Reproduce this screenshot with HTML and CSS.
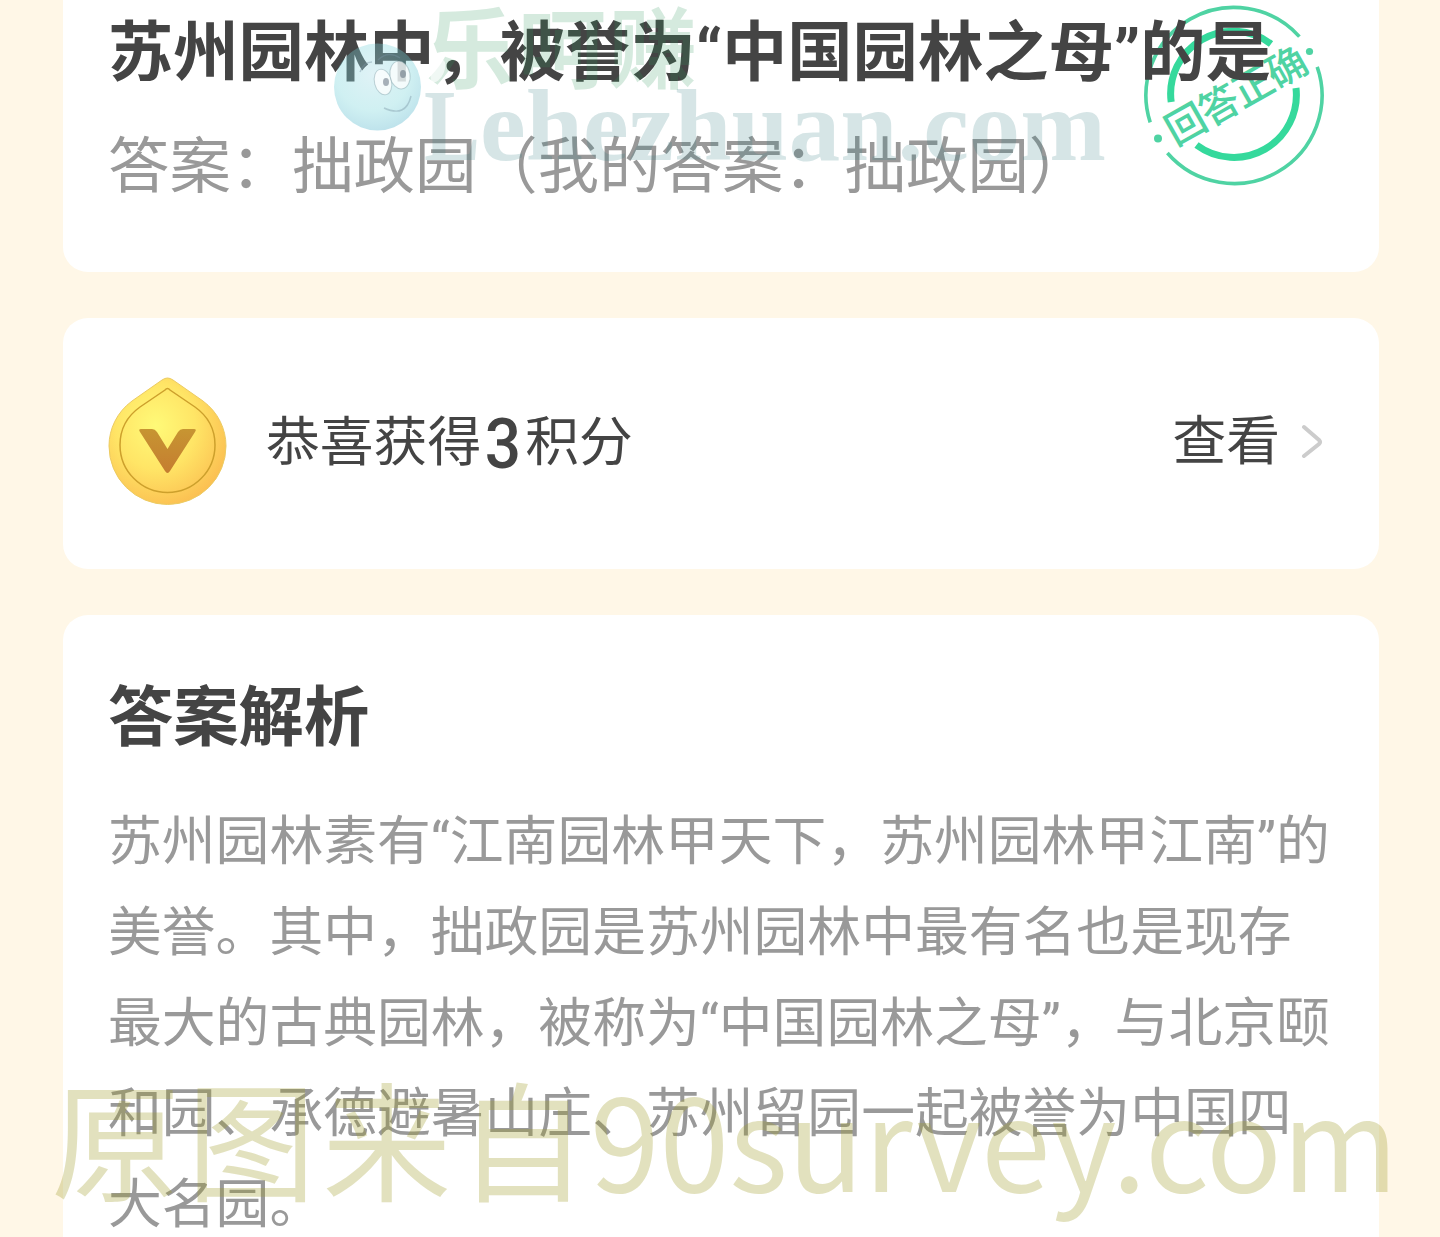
FILE: index.html
```html
<!DOCTYPE html>
<html lang="zh-CN">
<head>
<meta charset="utf-8">
<title>答案解析</title>
<link rel="stylesheet" href="styles.css">
</head>
<body>
<main class="page">
  <section class="card question">
    <h1 class="title">苏州园林中，被誉为“中国园林之母”的是</h1>
    <p class="answer">答案：拙政园（我的答案：拙政园）</p>
    <svg class="stamp" viewBox="0 0 190 190">
      <g fill="none" stroke="#4fd3a3" stroke-width="3.6">
        <path d="M11.200 122.400A88 88 0 0 1 160.400 36.600"/>
        <path d="M178.200 66.800A88 88 0 0 1 28.400 153"/>
      </g>
      <g fill="none" stroke="#35d99c" stroke-width="7">
        <path d="M32.200 102A62.500 62.500 0 0 1 132 44"/>
        <path d="M157 88A62.500 62.500 0 0 1 57.500 145"/>
      </g>
      <circle cx="19" cy="138.500" r="4"/>
      <circle cx="170.500" cy="51.500" r="3.600"/>
      <text transform="translate(98 95) rotate(-29.500)" x="-79" y="14.500" textLength="156">回答正确</text>
    </svg>
  </section>

  <section class="card reward">
    <svg class="coin" viewBox="0 0 120 132">
      <defs>
        <radialGradient id="gold" cx=".4" cy=".38" r=".68">
          <stop offset="0" stop-color="#fffa78"/>
          <stop offset=".5" stop-color="#ffe566"/>
          <stop offset="1" stop-color="#fbbd50"/>
        </radialGradient>
        <linearGradient id="bronze" x1="0" y1="0" x2="0" y2="1">
          <stop offset="0" stop-color="#c79532"/>
          <stop offset="1" stop-color="#c57d30"/>
        </linearGradient>
      </defs>
      <path d="M54 4Q59.500 0 65 4L95 25C110 36 118 53 118 70A58.500 58.500 0 0 1 1 70C1 53 9 36 24 25Z" fill="url(#gold)" stroke="#eccb62" stroke-width="1"/>
      <path d="M57 14Q59.500 11 62 14L87 31C101 41 107 55 107 69A47.500 47.500 0 0 1 12 69C12 55 18 41 32 31Z" fill="none" stroke="#cda02c" stroke-width="1.500"/>
      <path d="M33 53H44Q47 53 49 56L59.500 73L70 56Q72 53 75 53H86Q89 53 87 56L62 95Q59.500 99 57 95L32 56Q30 53 33 53Z" fill="url(#bronze)"/>
    </svg>
    <p class="reward-text">恭喜获得<span class="points">3</span>积分</p>
    <span class="view">查看</span>
    <svg class="chevron" viewBox="0 0 22 36"><path d="M3 3L18 16Q20 18 18 20L3 32"/></svg>
  </section>

  <section class="card analysis">
    <h2 class="title">答案解析</h2>
    <p class="explain">苏州园林素有“江南园林甲天下，苏州园林甲江南”的<br>美誉。其中，拙政园是苏州园林中最有名也是现存<br>最大的古典园林，被称为“中国园林之母”，与北京颐<br>和园、承德避暑山庄、苏州留园一起被誉为中国四<br>大名园。</p>
  </section>

  <svg class="watermarks" viewBox="0 0 1440 1237">
    <defs>
      <radialGradient id="ball" cx=".45" cy=".35" r=".65">
        <stop offset="0" stop-color="#a8dce6" stop-opacity=".36"/>
        <stop offset=".65" stop-color="#70d2d8" stop-opacity=".33"/>
        <stop offset="1" stop-color="#55b5cc" stop-opacity=".38"/>
      </radialGradient>
    </defs>
    <circle cx="377.500" cy="87" r="43.500" fill="url(#ball)"/>
    <g fill="#fff" fill-opacity=".75" stroke="#7899a0" stroke-opacity=".4">
      <ellipse cx="383" cy="82" rx="8.500" ry="13" transform="rotate(-14 383 82)"/>
      <ellipse cx="400" cy="75" rx="10" ry="14" transform="rotate(-10 400 75)"/>
    </g>
    <g fill="#456" fill-opacity=".45"><ellipse cx="386" cy="82" rx="3" ry="4"/><ellipse cx="403" cy="74" rx="3" ry="4"/></g>
    <path d="M384 108Q406 118 411 96M360 72Q364 62 372 62M378 60Q388 50 400 58" fill="none" stroke="#7793a2" stroke-opacity=".4" stroke-width="1.500"/>
    <text class="mark-name" y="81" x="426 518 609">乐呵赚</text>
    <text class="mark-site" y="160"><tspan x="424" textLength="56" lengthAdjust="spacingAndGlyphs">L</tspan><tspan x="480" textLength="626" lengthAdjust="spacingAndGlyphs">ehezhuan.com</tspan></text>
    <ellipse cx="438" cy="71" rx="6" ry="12" transform="rotate(25 438 71)" fill="#fff" fill-opacity=".65"/>
    <text class="mark-source" x="51" y="1192" textLength="536">原图来自</text>
    <text class="mark-source latin" x="590" y="1192" textLength="808" lengthAdjust="spacingAndGlyphs">90survey.com</text>
  </svg>
</main>
</body>
</html>
```
FILE: styles.css
```css
* { box-sizing: border-box; }
body {
  margin: 0;
  background: #fff7e7;
  color: #444;
  font-family: Roboto, "Noto Sans CJK SC", sans-serif;
}
.page {
  position: relative;
  height: 1237px;
  overflow: hidden;
  padding: 0 61px 0 63px;
  display: flex;
  flex-direction: column;
  gap: 46px;
}
.card {
  flex: none;
  background: #fff;
  border-radius: 25px;
  padding: 0 46px 0 45px;
}
h1, h2, p { margin: 0; white-space: nowrap; }
.title { font-size: 65.300px; font-weight: 700; line-height: 92px; }
.question {
  position: relative;
  height: 272px;
  padding-top: 7px;
  border-radius: 0 0 25px 25px;
}
.question .title { position: relative; z-index: 1; }
.answer { font-size: 61.400px; line-height: 90px; margin-top: 23px; color: #999; }
.stamp { position: absolute; left: 1076px; top: 0; width: 190px; height: 190px; fill: #4fd3a3; }
.stamp text { font-size: 40px; font-weight: 500; }
.reward { height: 251px; display: flex; align-items: center; padding-bottom: 4px; }
.coin { width: 120px; height: 132px; flex: none; }
.reward-text { font-size: 53.800px; line-height: 80px; margin-left: 38px; }
.points { display: inline-block; width: 44px; text-align: center; font-size: 71px; font-weight: 500; line-height: 1; transform: translateY(7px) scaleX(.9); }
.view { margin-left: auto; font-size: 53.800px; line-height: 80px; }
.chevron { width: 22px; height: 36px; margin: 0 10px 0 21px; fill: none; stroke: #ccc; stroke-width: 4; stroke-linecap: round; }
.analysis { height: 700px; padding-top: 57px; }
.explain { font-size: 53.800px; line-height: 90.800px; margin-top: 33px; color: #999; }
.watermarks { position: absolute; left: 0; top: 0; width: 1440px; height: 1237px; z-index: 2; pointer-events: none; }
.mark-name { font-size: 88px; font-weight: 700; fill: rgba(45, 150, 90, .2); }
.mark-site { font-family: "Liberation Serif", serif; font-size: 101px; font-weight: 700; fill: rgba(50, 125, 130, .2); }
.mark-source { font-family: "Noto Sans CJK SC", sans-serif; font-size: 129px; font-weight: 400; fill: rgba(160, 155, 40, .3); }
.mark-source.latin { font-size: 127px; }
```
